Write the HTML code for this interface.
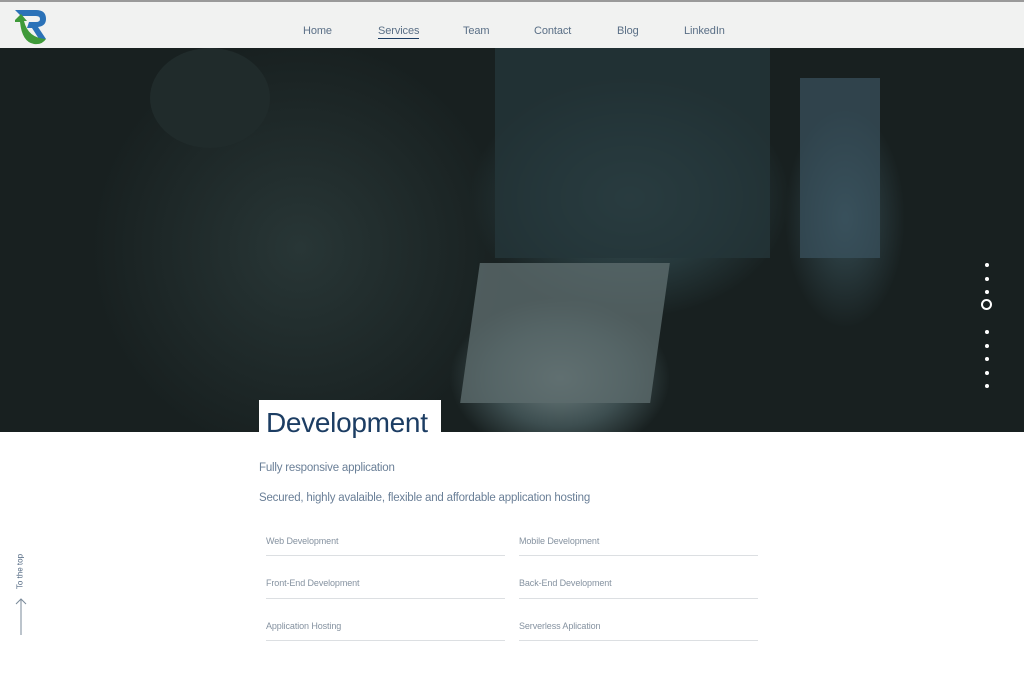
<!DOCTYPE html>
<html><head><meta charset="utf-8"><style>
*{margin:0;padding:0;box-sizing:border-box}
body{width:1024px;height:680px;overflow:hidden;background:#fff;font-family:"Liberation Sans",Arial,sans-serif;position:relative}
.nav{position:absolute;left:0;top:0;width:1024px;height:48px;background:#f1f2f1;border-top:2px solid #9a9a9a;z-index:3}
.nav a{position:absolute;top:23px;font-size:11px;color:#5a6f86;text-decoration:none;letter-spacing:-0.1px}
.hero{position:absolute;left:0;top:48px;width:1024px;height:384px;background:
radial-gradient(ellipse 160px 120px at 630px 150px,#3d5358 0%,#26383b 60%,transparent 100%),
radial-gradient(ellipse 110px 80px at 560px 330px,#6f7f80 0%,#3d4e50 60%,transparent 100%),
radial-gradient(ellipse 60px 110px at 845px 170px,#354c53 0%,transparent 100%),
radial-gradient(ellipse 300px 300px at 300px 200px,#283636 0%,#182020 70%),
#161e1e;overflow:hidden}
.dot{position:absolute;left:985px;width:4px;height:4px;border-radius:50%;background:#fff}
.title{position:absolute;left:259px;top:400px;width:182px;height:40px;background:#fff;z-index:2}
.title span{position:absolute;left:7px;top:7px;font-size:28px;color:#1c3d63;letter-spacing:-0.3px}
.p{position:absolute;left:259px;font-size:11.5px;color:#6a7f97;letter-spacing:-0.2px}
.item{position:absolute;width:239px;height:1px;background:#dcdfe2}
.it{position:absolute;font-size:9px;color:#8592a0;letter-spacing:-0.1px}
</style></head><body>
<div class="nav">
<svg style="position:absolute;left:12px;top:6px" width="38" height="38" viewBox="0 0 38 38">
<path d="M3 2 H24 Q34 2 34 11 Q34 18 26 19 L34 31 H27 L20 20 H15 L17 14 H24 Q28 14 28 11 Q28 8 24 8 H9 Z" fill="#2b72b8"/>
<path d="M3 12 L9 6 L15 13 L12 13 Q16 30 34 31 Q30 37 22 36 Q10 34 8 14 L3 14 Z" fill="#3f9a3a"/>
</svg>
<a style="left:303px">Home</a>
<a style="left:378px;border-bottom:1px solid #1c3d63;padding-bottom:1px">Services</a>
<a style="left:463px">Team</a>
<a style="left:534px">Contact</a>
<a style="left:617px">Blog</a>
<a style="left:684px">LinkedIn</a>
</div>
<div class="hero">
<div style="position:absolute;left:495px;top:0;width:275px;height:210px;background:#24363a;opacity:.8"></div>
<div style="position:absolute;left:470px;top:215px;width:190px;height:140px;background:#5c6c6d;transform:skewX(-8deg);opacity:.8"></div>
<div style="position:absolute;left:800px;top:30px;width:80px;height:180px;background:#3a5360;opacity:.7"></div>
<div style="position:absolute;left:150px;top:0;width:120px;height:100px;border-radius:50%;background:#202b2b"></div>
</div>
<div class="dot" style="top:263px"></div><div class="dot" style="top:277px"></div><div class="dot" style="top:290px"></div>
<div style="position:absolute;left:981px;top:299px;width:11px;height:11px;border-radius:50%;border:2px solid #fff"></div>
<div class="dot" style="top:330px"></div><div class="dot" style="top:344px"></div><div class="dot" style="top:357px"></div><div class="dot" style="top:371px"></div><div class="dot" style="top:384px"></div>
<div class="title"><span>Development</span></div>
<div class="p" style="top:462px">Fully responsive application</div>
<div class="p" style="top:492px">Secured, highly avalaible, flexible and affordable application hosting</div>
<div class="it" style="left:266px;top:536px">Web Development</div><div class="item" style="left:266px;top:555px"></div>
<div class="it" style="left:519px;top:536px">Mobile Development</div><div class="item" style="left:519px;top:555px"></div>
<div class="it" style="left:266px;top:578px">Front-End Development</div><div class="item" style="left:266px;top:598px"></div>
<div class="it" style="left:519px;top:578px">Back-End Development</div><div class="item" style="left:519px;top:598px"></div>
<div class="it" style="left:266px;top:621px">Application Hosting</div><div class="item" style="left:266px;top:640px"></div>
<div class="it" style="left:519px;top:621px">Serverless Aplication</div><div class="item" style="left:519px;top:640px"></div>
<div style="position:absolute;left:-5px;top:567px;transform:rotate(-90deg);font-size:8px;color:#4f6680;width:50px;text-align:center">To the top</div>
<svg style="position:absolute;left:15px;top:598px" width="12" height="38"><path d="M6 1 V37 M1 6 L6 1 L11 6" stroke="#7a8a9a" fill="none" stroke-width="1"/></svg>
</body></html>
